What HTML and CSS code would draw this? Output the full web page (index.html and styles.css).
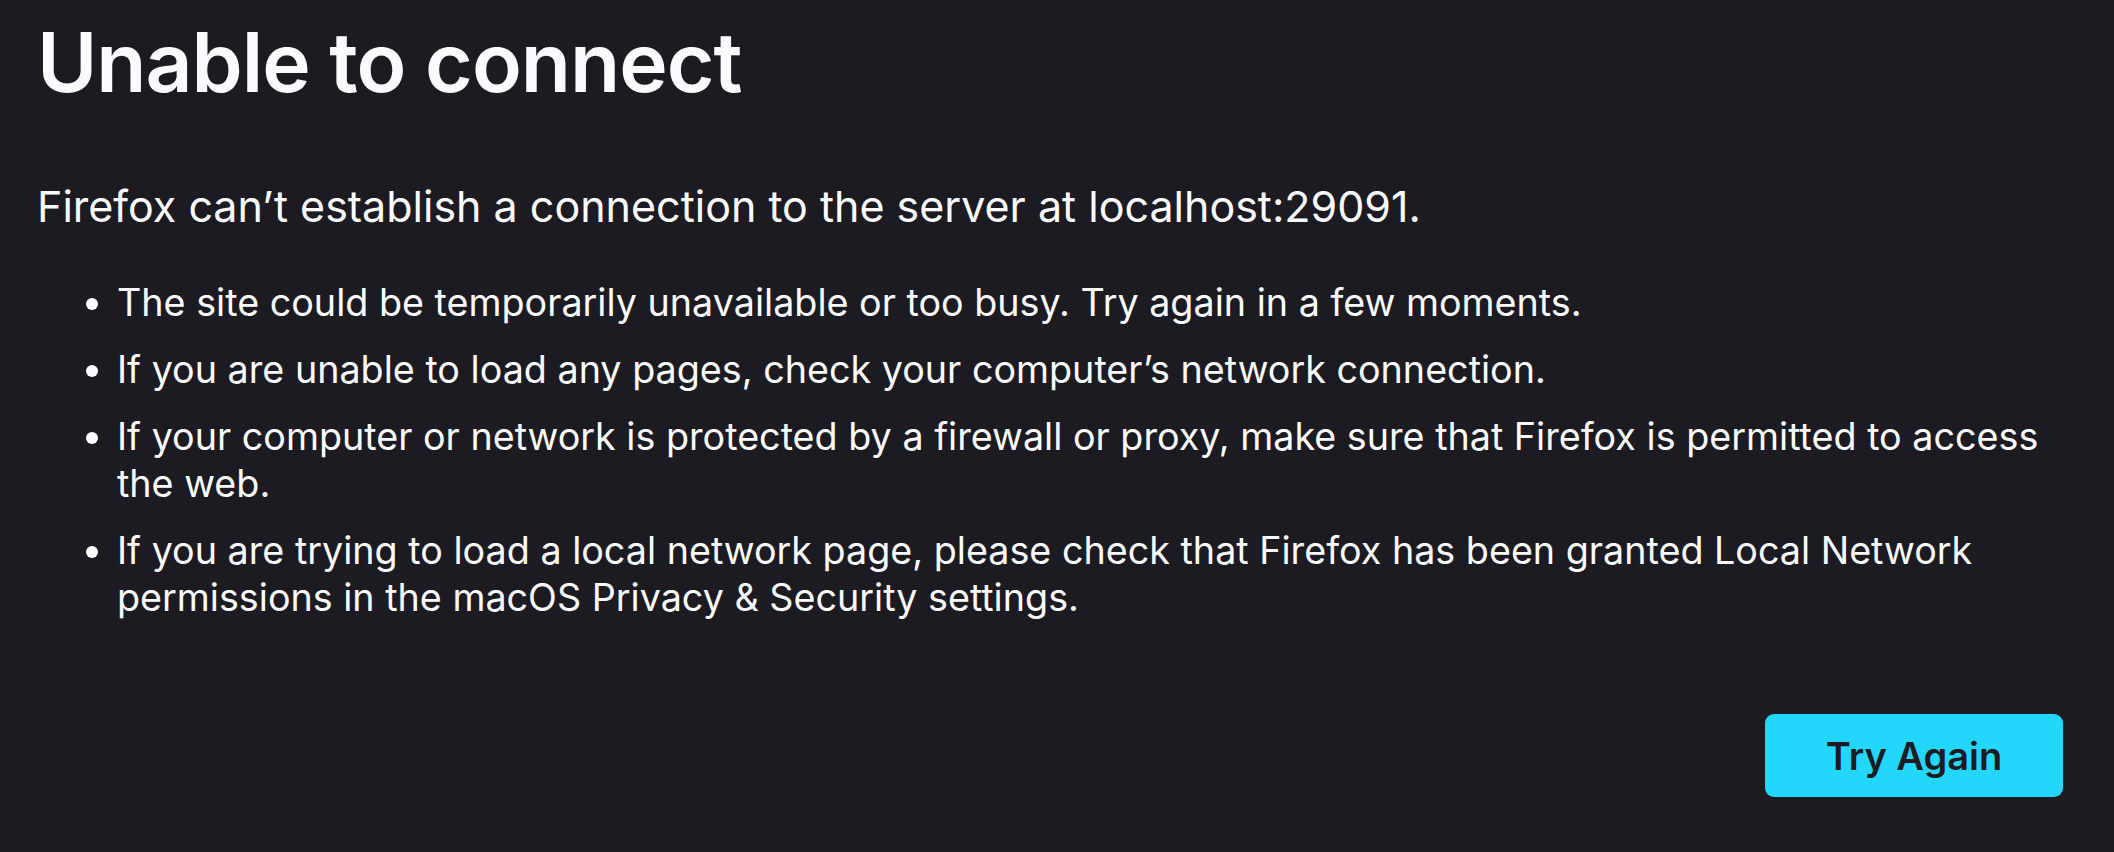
FILE: index.html
```html
<!DOCTYPE html>
<html lang="en">
<head>
<meta charset="utf-8">
<title>Problem loading page</title>
<link rel="stylesheet" href="styles.css">
</head>
<body>
<main class="container">
  <h1 class="title">Unable to connect</h1>
  <p class="intro">Firefox can’t establish a connection to the server at localhost:29091.</p>
  <ul class="tips">
    <li>The site could be temporarily unavailable or too busy. Try again in a few moments.</li>
    <li>If you are unable to load any pages, check your computer’s network connection.</li>
    <li>If your computer or network is protected by a firewall or proxy, make sure that Firefox is permitted to access the web.</li>
    <li>If you are trying to load a local network page, please check that Firefox has been granted Local Network permissions in the macOS Privacy &amp; Security settings.</li>
  </ul>
  <div class="actions">
    <button class="primary" type="button">Try Again</button>
  </div>
</main>
</body>
</html>
```
FILE: styles.css
```css
html, body {
  margin: 0;
  padding: 0;
  background: #1c1b22;
  color: #fbfbfe;
  font-family: Inter, "Noto Sans", "Liberation Sans", sans-serif;
}
.container {
  padding: 13px 40px 0 37px;
}
.title {
  margin: 0;
  font-size: 82px;
  line-height: 100px;
  font-weight: 600;
  letter-spacing: -1px;
}
.intro {
  margin: 70px 0 0 0;
  font-size: 43px;
  line-height: 47px;
  font-weight: 400;
}
.tips {
  margin: 49px 0 0 0;
  padding: 0 0 0 80px;
  font-size: 37.7px;
  line-height: 47px;
}
.tips li {
  margin-bottom: 20px;
}
.tips li:last-child {
  margin-bottom: 0;
}
.actions {
  display: flex;
  justify-content: flex-end;
  padding-right: 11px;
  margin-top: 93px;
}
.primary {
  width: 298px;
  height: 83px;
  border: none;
  border-radius: 9px;
  background: #22d7fb;
  color: #1c1b22;
  font-family: Inter, "Noto Sans", "Liberation Sans", sans-serif;
  font-size: 38px;
  font-weight: 600;
}
```
